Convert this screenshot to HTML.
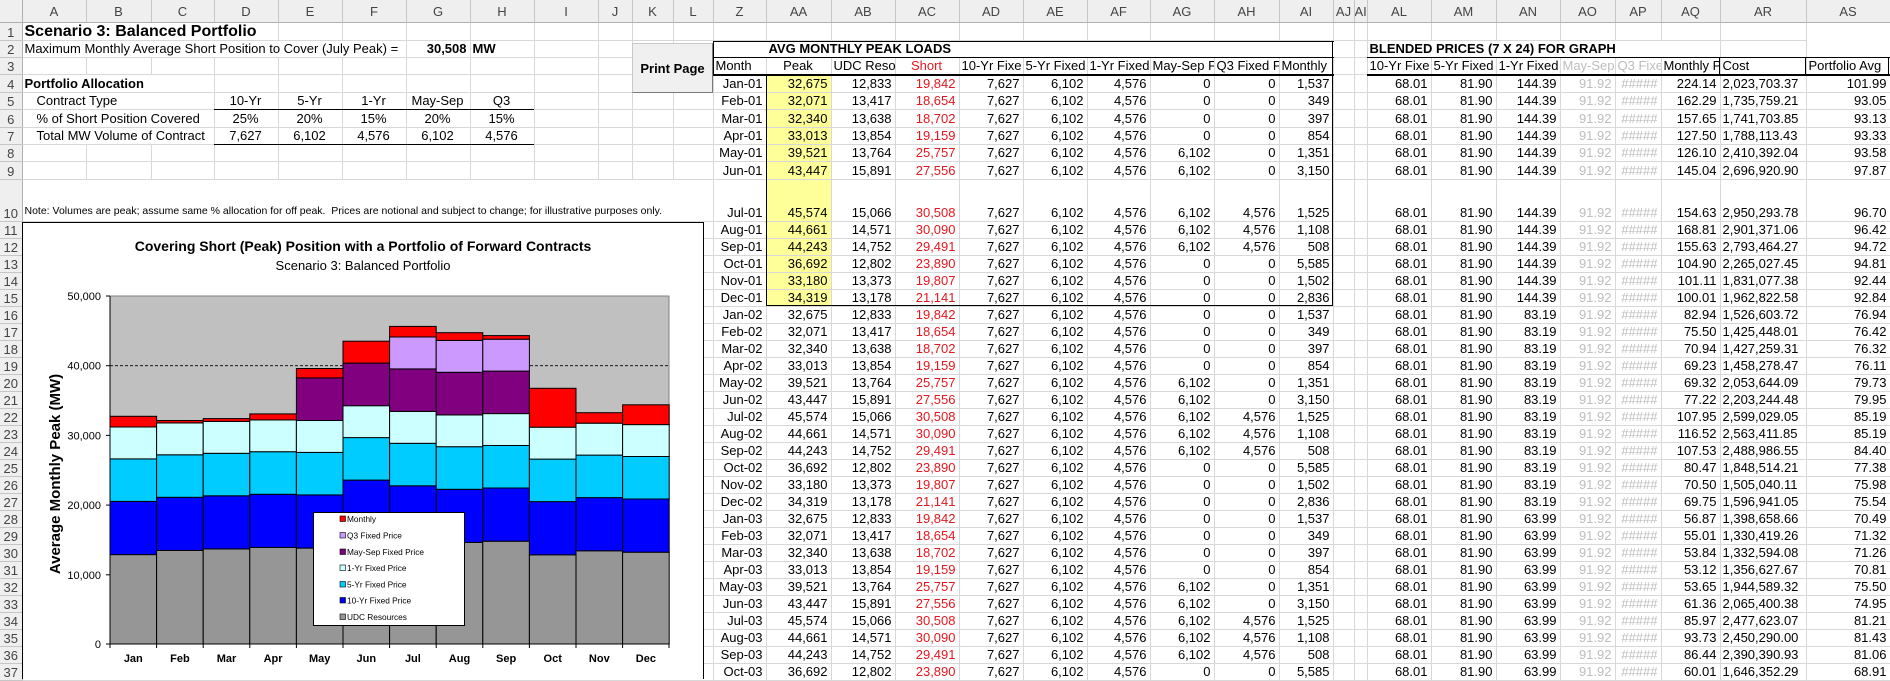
<!DOCTYPE html>
<html><head><meta charset="utf-8">
<style>
*{margin:0;padding:0;box-sizing:border-box}
body{width:1890px;height:679px;overflow:hidden;background:#fff;font-family:"Liberation Sans",Arial,sans-serif;position:relative}
table{position:absolute;left:0;top:0;border-collapse:collapse;table-layout:fixed;width:1890px}
td,th{border-right:1px solid #d8d8d8;border-bottom:1px solid #d8d8d8;font-size:13px;line-height:15px;white-space:nowrap;overflow:hidden;vertical-align:bottom;padding:0 3px 1px 2px;text-align:right;font-weight:normal;color:#000}
th{background:#efefef;color:#444;text-align:center;padding:0;border-color:#c6c6c6}
tr.h th{vertical-align:middle;height:22.7px;border-bottom:1px solid #b0b0b0}
tr.a td,tr.a th{height:17.4px}
tr.t td,tr.t th{height:42.7px}
tr.b td,tr.b th{height:16.9px}
th.rn{border-right:1px solid #b0b0b0}
.l{text-align:left}.c{text-align:center}.bo{font-weight:bold}
.rd{color:#e4171f}.g{color:#bdbdbd}.y{background:#ffff99}
.ln{position:absolute;background:#000}
#btn{position:absolute;left:632px;top:43px;width:81px;height:50px;background:#f0f0f0;border:1px solid #c8c8c8;border-right-color:#7a7a7a;border-bottom-color:#7a7a7a;font-weight:bold;font-size:13px;display:flex;align-items:center;justify-content:center}
</style></head><body>
<table>
<colgroup><col style="width:22px"><col style="width:64px"><col style="width:65px"><col style="width:63px"><col style="width:64px"><col style="width:64px"><col style="width:64px"><col style="width:64px"><col style="width:64px"><col style="width:64px"><col style="width:34px"><col style="width:41px"><col style="width:40px"><col style="width:53px"><col style="width:65px"><col style="width:64px"><col style="width:64px"><col style="width:64px"><col style="width:64px"><col style="width:63px"><col style="width:64px"><col style="width:65px"><col style="width:54px"><col style="width:21px"><col style="width:13px"><col style="width:64px"><col style="width:65px"><col style="width:64px"><col style="width:55px"><col style="width:46px"><col style="width:59px"><col style="width:86px"><col style="width:84px"></colgroup>
<tr class="h"><th class="rn"></th><th>A</th><th>B</th><th>C</th><th>D</th><th>E</th><th>F</th><th>G</th><th>H</th><th>I</th><th>J</th><th>K</th><th>L</th><th>Z</th><th>AA</th><th>AB</th><th>AC</th><th>AD</th><th>AE</th><th>AF</th><th>AG</th><th>AH</th><th>AI</th><th>AJ</th><th>AI</th><th>AL</th><th>AM</th><th>AN</th><th>AO</th><th>AP</th><th>AQ</th><th>AR</th><th>AS</th></tr>
<tr class="a"><th class="rn">1</th><td colspan="4" class="l bo" style="font-size:16px;overflow:visible">Scenario 3: Balanced Portfolio</td><td></td><td></td><td></td><td></td><td></td><td></td><td></td><td></td><td></td><td></td><td></td><td></td><td></td><td></td><td></td><td></td><td></td><td></td><td></td><td></td><td></td><td></td><td></td><td></td><td></td><td></td><td></td></tr>
<tr class="a"><th class="rn">2</th><td colspan="6" class="l">Maximum Monthly Average Short Position to Cover (July Peak) =</td><td class="bo">30,508</td><td class="l bo">MW</td><td></td><td></td><td></td><td></td><td style="border-color:#fff"></td><td colspan="9" class="l bo" style="border-right:0">AVG MONTHLY PEAK LOADS</td><td></td><td></td><td colspan="6" class="l bo" style="overflow:visible">BLENDED PRICES (7 X 24) FOR GRAPH</td><td></td><td></td></tr>
<tr class="a"><th class="rn">3</th><td></td><td></td><td></td><td></td><td></td><td></td><td></td><td></td><td></td><td></td><td></td><td></td><td class="l">Month</td><td class="c">Peak</td><td class="l">UDC Reso</td><td class="c rd">Short</td><td class="l">10-Yr Fixe</td><td class="l">5-Yr Fixed</td><td class="l">1-Yr Fixed</td><td class="l">May-Sep F</td><td class="l">Q3 Fixed F</td><td class="l">Monthly</td><td></td><td></td><td class="l">10-Yr Fixe</td><td class="l">5-Yr Fixed</td><td class="l">1-Yr Fixed</td><td class="l g">May-Sep</td><td class="l g">Q3 Fixe</td><td class="l">Monthly P</td><td class="l">Cost</td><td class="l">Portfolio Avg</td></tr>
<tr class="a"><th class="rn">4</th><td colspan="3" class="l bo">Portfolio Allocation</td><td></td><td></td><td></td><td></td><td></td><td></td><td></td><td></td><td></td><td>Jan-01</td><td class="y">32,675</td><td>12,833</td><td class="rd">19,842</td><td>7,627</td><td>6,102</td><td>4,576</td><td>0</td><td>0</td><td>1,537</td><td></td><td></td><td>68.01</td><td>81.90</td><td>144.39</td><td class="g">91.92</td><td class="g">#####</td><td>224.14</td><td class="l">2,023,703.37</td><td>101.99</td></tr>
<tr class="a"><th class="rn">5</th><td colspan="3" class="l" style="padding-left:14px">Contract Type</td><td class="c">10-Yr</td><td class="c">5-Yr</td><td class="c">1-Yr</td><td class="c">May-Sep</td><td class="c">Q3</td><td></td><td></td><td></td><td></td><td>Feb-01</td><td class="y">32,071</td><td>13,417</td><td class="rd">18,654</td><td>7,627</td><td>6,102</td><td>4,576</td><td>0</td><td>0</td><td>349</td><td></td><td></td><td>68.01</td><td>81.90</td><td>144.39</td><td class="g">91.92</td><td class="g">#####</td><td>162.29</td><td class="l">1,735,759.21</td><td>93.05</td></tr>
<tr class="a"><th class="rn">6</th><td colspan="3" class="l" style="padding-left:14px">% of Short Position Covered</td><td class="c">25%</td><td class="c">20%</td><td class="c">15%</td><td class="c">20%</td><td class="c">15%</td><td></td><td></td><td></td><td></td><td>Mar-01</td><td class="y">32,340</td><td>13,638</td><td class="rd">18,702</td><td>7,627</td><td>6,102</td><td>4,576</td><td>0</td><td>0</td><td>397</td><td></td><td></td><td>68.01</td><td>81.90</td><td>144.39</td><td class="g">91.92</td><td class="g">#####</td><td>157.65</td><td class="l">1,741,703.85</td><td>93.13</td></tr>
<tr class="a"><th class="rn">7</th><td colspan="3" class="l" style="padding-left:14px">Total MW Volume of Contract</td><td class="c">7,627</td><td class="c">6,102</td><td class="c">4,576</td><td class="c">6,102</td><td class="c">4,576</td><td></td><td></td><td></td><td></td><td>Apr-01</td><td class="y">33,013</td><td>13,854</td><td class="rd">19,159</td><td>7,627</td><td>6,102</td><td>4,576</td><td>0</td><td>0</td><td>854</td><td></td><td></td><td>68.01</td><td>81.90</td><td>144.39</td><td class="g">91.92</td><td class="g">#####</td><td>127.50</td><td class="l">1,788,113.43</td><td>93.33</td></tr>
<tr class="a"><th class="rn">8</th><td></td><td></td><td></td><td></td><td></td><td></td><td></td><td></td><td></td><td></td><td></td><td></td><td>May-01</td><td class="y">39,521</td><td>13,764</td><td class="rd">25,757</td><td>7,627</td><td>6,102</td><td>4,576</td><td>6,102</td><td>0</td><td>1,351</td><td></td><td></td><td>68.01</td><td>81.90</td><td>144.39</td><td class="g">91.92</td><td class="g">#####</td><td>126.10</td><td class="l">2,410,392.04</td><td>93.58</td></tr>
<tr class="a"><th class="rn">9</th><td></td><td></td><td></td><td></td><td></td><td></td><td></td><td></td><td></td><td></td><td></td><td></td><td>Jun-01</td><td class="y">43,447</td><td>15,891</td><td class="rd">27,556</td><td>7,627</td><td>6,102</td><td>4,576</td><td>6,102</td><td>0</td><td>3,150</td><td></td><td></td><td>68.01</td><td>81.90</td><td>144.39</td><td class="g">91.92</td><td class="g">#####</td><td>145.04</td><td class="l">2,696,920.90</td><td>97.87</td></tr>
<tr class="t"><th class="rn">10</th><td colspan="12" class="l" style="font-size:10.5px;padding-bottom:2px">Note: Volumes are peak; assume same % allocation for off peak.&nbsp; Prices are notional and subject to change; for illustrative purposes only.</td><td>Jul-01</td><td class="y">45,574</td><td>15,066</td><td class="rd">30,508</td><td>7,627</td><td>6,102</td><td>4,576</td><td>6,102</td><td>4,576</td><td>1,525</td><td></td><td></td><td>68.01</td><td>81.90</td><td>144.39</td><td class="g">91.92</td><td class="g">#####</td><td>154.63</td><td class="l">2,950,293.78</td><td>96.70</td></tr>
<tr class="b"><th class="rn">11</th><td colspan="12"></td><td>Aug-01</td><td class="y">44,661</td><td>14,571</td><td class="rd">30,090</td><td>7,627</td><td>6,102</td><td>4,576</td><td>6,102</td><td>4,576</td><td>1,108</td><td></td><td></td><td>68.01</td><td>81.90</td><td>144.39</td><td class="g">91.92</td><td class="g">#####</td><td>168.81</td><td class="l">2,901,371.06</td><td>96.42</td></tr>
<tr class="b"><th class="rn">12</th><td colspan="12"></td><td>Sep-01</td><td class="y">44,243</td><td>14,752</td><td class="rd">29,491</td><td>7,627</td><td>6,102</td><td>4,576</td><td>6,102</td><td>4,576</td><td>508</td><td></td><td></td><td>68.01</td><td>81.90</td><td>144.39</td><td class="g">91.92</td><td class="g">#####</td><td>155.63</td><td class="l">2,793,464.27</td><td>94.72</td></tr>
<tr class="b"><th class="rn">13</th><td colspan="12"></td><td>Oct-01</td><td class="y">36,692</td><td>12,802</td><td class="rd">23,890</td><td>7,627</td><td>6,102</td><td>4,576</td><td>0</td><td>0</td><td>5,585</td><td></td><td></td><td>68.01</td><td>81.90</td><td>144.39</td><td class="g">91.92</td><td class="g">#####</td><td>104.90</td><td class="l">2,265,027.45</td><td>94.81</td></tr>
<tr class="b"><th class="rn">14</th><td colspan="12"></td><td>Nov-01</td><td class="y">33,180</td><td>13,373</td><td class="rd">19,807</td><td>7,627</td><td>6,102</td><td>4,576</td><td>0</td><td>0</td><td>1,502</td><td></td><td></td><td>68.01</td><td>81.90</td><td>144.39</td><td class="g">91.92</td><td class="g">#####</td><td>101.11</td><td class="l">1,831,077.38</td><td>92.44</td></tr>
<tr class="b"><th class="rn">15</th><td colspan="12"></td><td>Dec-01</td><td class="y">34,319</td><td>13,178</td><td class="rd">21,141</td><td>7,627</td><td>6,102</td><td>4,576</td><td>0</td><td>0</td><td>2,836</td><td></td><td></td><td>68.01</td><td>81.90</td><td>144.39</td><td class="g">91.92</td><td class="g">#####</td><td>100.01</td><td class="l">1,962,822.58</td><td>92.84</td></tr>
<tr class="b"><th class="rn">16</th><td colspan="12"></td><td>Jan-02</td><td>32,675</td><td>12,833</td><td class="rd">19,842</td><td>7,627</td><td>6,102</td><td>4,576</td><td>0</td><td>0</td><td>1,537</td><td></td><td></td><td>68.01</td><td>81.90</td><td>83.19</td><td class="g">91.92</td><td class="g">#####</td><td>82.94</td><td class="l">1,526,603.72</td><td>76.94</td></tr>
<tr class="b"><th class="rn">17</th><td colspan="12"></td><td>Feb-02</td><td>32,071</td><td>13,417</td><td class="rd">18,654</td><td>7,627</td><td>6,102</td><td>4,576</td><td>0</td><td>0</td><td>349</td><td></td><td></td><td>68.01</td><td>81.90</td><td>83.19</td><td class="g">91.92</td><td class="g">#####</td><td>75.50</td><td class="l">1,425,448.01</td><td>76.42</td></tr>
<tr class="b"><th class="rn">18</th><td colspan="12"></td><td>Mar-02</td><td>32,340</td><td>13,638</td><td class="rd">18,702</td><td>7,627</td><td>6,102</td><td>4,576</td><td>0</td><td>0</td><td>397</td><td></td><td></td><td>68.01</td><td>81.90</td><td>83.19</td><td class="g">91.92</td><td class="g">#####</td><td>70.94</td><td class="l">1,427,259.31</td><td>76.32</td></tr>
<tr class="b"><th class="rn">19</th><td colspan="12"></td><td>Apr-02</td><td>33,013</td><td>13,854</td><td class="rd">19,159</td><td>7,627</td><td>6,102</td><td>4,576</td><td>0</td><td>0</td><td>854</td><td></td><td></td><td>68.01</td><td>81.90</td><td>83.19</td><td class="g">91.92</td><td class="g">#####</td><td>69.23</td><td class="l">1,458,278.47</td><td>76.11</td></tr>
<tr class="b"><th class="rn">20</th><td colspan="12"></td><td>May-02</td><td>39,521</td><td>13,764</td><td class="rd">25,757</td><td>7,627</td><td>6,102</td><td>4,576</td><td>6,102</td><td>0</td><td>1,351</td><td></td><td></td><td>68.01</td><td>81.90</td><td>83.19</td><td class="g">91.92</td><td class="g">#####</td><td>69.32</td><td class="l">2,053,644.09</td><td>79.73</td></tr>
<tr class="b"><th class="rn">21</th><td colspan="12"></td><td>Jun-02</td><td>43,447</td><td>15,891</td><td class="rd">27,556</td><td>7,627</td><td>6,102</td><td>4,576</td><td>6,102</td><td>0</td><td>3,150</td><td></td><td></td><td>68.01</td><td>81.90</td><td>83.19</td><td class="g">91.92</td><td class="g">#####</td><td>77.22</td><td class="l">2,203,244.48</td><td>79.95</td></tr>
<tr class="b"><th class="rn">22</th><td colspan="12"></td><td>Jul-02</td><td>45,574</td><td>15,066</td><td class="rd">30,508</td><td>7,627</td><td>6,102</td><td>4,576</td><td>6,102</td><td>4,576</td><td>1,525</td><td></td><td></td><td>68.01</td><td>81.90</td><td>83.19</td><td class="g">91.92</td><td class="g">#####</td><td>107.95</td><td class="l">2,599,029.05</td><td>85.19</td></tr>
<tr class="b"><th class="rn">23</th><td colspan="12"></td><td>Aug-02</td><td>44,661</td><td>14,571</td><td class="rd">30,090</td><td>7,627</td><td>6,102</td><td>4,576</td><td>6,102</td><td>4,576</td><td>1,108</td><td></td><td></td><td>68.01</td><td>81.90</td><td>83.19</td><td class="g">91.92</td><td class="g">#####</td><td>116.52</td><td class="l">2,563,411.85</td><td>85.19</td></tr>
<tr class="b"><th class="rn">24</th><td colspan="12"></td><td>Sep-02</td><td>44,243</td><td>14,752</td><td class="rd">29,491</td><td>7,627</td><td>6,102</td><td>4,576</td><td>6,102</td><td>4,576</td><td>508</td><td></td><td></td><td>68.01</td><td>81.90</td><td>83.19</td><td class="g">91.92</td><td class="g">#####</td><td>107.53</td><td class="l">2,488,986.55</td><td>84.40</td></tr>
<tr class="b"><th class="rn">25</th><td colspan="12"></td><td>Oct-02</td><td>36,692</td><td>12,802</td><td class="rd">23,890</td><td>7,627</td><td>6,102</td><td>4,576</td><td>0</td><td>0</td><td>5,585</td><td></td><td></td><td>68.01</td><td>81.90</td><td>83.19</td><td class="g">91.92</td><td class="g">#####</td><td>80.47</td><td class="l">1,848,514.21</td><td>77.38</td></tr>
<tr class="b"><th class="rn">26</th><td colspan="12"></td><td>Nov-02</td><td>33,180</td><td>13,373</td><td class="rd">19,807</td><td>7,627</td><td>6,102</td><td>4,576</td><td>0</td><td>0</td><td>1,502</td><td></td><td></td><td>68.01</td><td>81.90</td><td>83.19</td><td class="g">91.92</td><td class="g">#####</td><td>70.50</td><td class="l">1,505,040.11</td><td>75.98</td></tr>
<tr class="b"><th class="rn">27</th><td colspan="12"></td><td>Dec-02</td><td>34,319</td><td>13,178</td><td class="rd">21,141</td><td>7,627</td><td>6,102</td><td>4,576</td><td>0</td><td>0</td><td>2,836</td><td></td><td></td><td>68.01</td><td>81.90</td><td>83.19</td><td class="g">91.92</td><td class="g">#####</td><td>69.75</td><td class="l">1,596,941.05</td><td>75.54</td></tr>
<tr class="b"><th class="rn">28</th><td colspan="12"></td><td>Jan-03</td><td>32,675</td><td>12,833</td><td class="rd">19,842</td><td>7,627</td><td>6,102</td><td>4,576</td><td>0</td><td>0</td><td>1,537</td><td></td><td></td><td>68.01</td><td>81.90</td><td>63.99</td><td class="g">91.92</td><td class="g">#####</td><td>56.87</td><td class="l">1,398,658.66</td><td>70.49</td></tr>
<tr class="b"><th class="rn">29</th><td colspan="12"></td><td>Feb-03</td><td>32,071</td><td>13,417</td><td class="rd">18,654</td><td>7,627</td><td>6,102</td><td>4,576</td><td>0</td><td>0</td><td>349</td><td></td><td></td><td>68.01</td><td>81.90</td><td>63.99</td><td class="g">91.92</td><td class="g">#####</td><td>55.01</td><td class="l">1,330,419.26</td><td>71.32</td></tr>
<tr class="b"><th class="rn">30</th><td colspan="12"></td><td>Mar-03</td><td>32,340</td><td>13,638</td><td class="rd">18,702</td><td>7,627</td><td>6,102</td><td>4,576</td><td>0</td><td>0</td><td>397</td><td></td><td></td><td>68.01</td><td>81.90</td><td>63.99</td><td class="g">91.92</td><td class="g">#####</td><td>53.84</td><td class="l">1,332,594.08</td><td>71.26</td></tr>
<tr class="b"><th class="rn">31</th><td colspan="12"></td><td>Apr-03</td><td>33,013</td><td>13,854</td><td class="rd">19,159</td><td>7,627</td><td>6,102</td><td>4,576</td><td>0</td><td>0</td><td>854</td><td></td><td></td><td>68.01</td><td>81.90</td><td>63.99</td><td class="g">91.92</td><td class="g">#####</td><td>53.12</td><td class="l">1,356,627.67</td><td>70.81</td></tr>
<tr class="b"><th class="rn">32</th><td colspan="12"></td><td>May-03</td><td>39,521</td><td>13,764</td><td class="rd">25,757</td><td>7,627</td><td>6,102</td><td>4,576</td><td>6,102</td><td>0</td><td>1,351</td><td></td><td></td><td>68.01</td><td>81.90</td><td>63.99</td><td class="g">91.92</td><td class="g">#####</td><td>53.65</td><td class="l">1,944,589.32</td><td>75.50</td></tr>
<tr class="b"><th class="rn">33</th><td colspan="12"></td><td>Jun-03</td><td>43,447</td><td>15,891</td><td class="rd">27,556</td><td>7,627</td><td>6,102</td><td>4,576</td><td>6,102</td><td>0</td><td>3,150</td><td></td><td></td><td>68.01</td><td>81.90</td><td>63.99</td><td class="g">91.92</td><td class="g">#####</td><td>61.36</td><td class="l">2,065,400.38</td><td>74.95</td></tr>
<tr class="b"><th class="rn">34</th><td colspan="12"></td><td>Jul-03</td><td>45,574</td><td>15,066</td><td class="rd">30,508</td><td>7,627</td><td>6,102</td><td>4,576</td><td>6,102</td><td>4,576</td><td>1,525</td><td></td><td></td><td>68.01</td><td>81.90</td><td>63.99</td><td class="g">91.92</td><td class="g">#####</td><td>85.97</td><td class="l">2,477,623.07</td><td>81.21</td></tr>
<tr class="b"><th class="rn">35</th><td colspan="12"></td><td>Aug-03</td><td>44,661</td><td>14,571</td><td class="rd">30,090</td><td>7,627</td><td>6,102</td><td>4,576</td><td>6,102</td><td>4,576</td><td>1,108</td><td></td><td></td><td>68.01</td><td>81.90</td><td>63.99</td><td class="g">91.92</td><td class="g">#####</td><td>93.73</td><td class="l">2,450,290.00</td><td>81.43</td></tr>
<tr class="b"><th class="rn">36</th><td colspan="12"></td><td>Sep-03</td><td>44,243</td><td>14,752</td><td class="rd">29,491</td><td>7,627</td><td>6,102</td><td>4,576</td><td>6,102</td><td>4,576</td><td>508</td><td></td><td></td><td>68.01</td><td>81.90</td><td>63.99</td><td class="g">91.92</td><td class="g">#####</td><td>86.44</td><td class="l">2,390,390.93</td><td>81.06</td></tr>
<tr class="b"><th class="rn">37</th><td colspan="12"></td><td>Oct-03</td><td>36,692</td><td>12,802</td><td class="rd">23,890</td><td>7,627</td><td>6,102</td><td>4,576</td><td>0</td><td>0</td><td>5,585</td><td></td><td></td><td>68.01</td><td>81.90</td><td>63.99</td><td class="g">91.92</td><td class="g">#####</td><td>60.01</td><td class="l">1,646,352.29</td><td>68.91</td></tr>
</table>

<!-- border overlays -->
<div class="ln" style="left:214px;top:109px;width:320px;height:1px"></div>
<div class="ln" style="left:214px;top:144px;width:320px;height:1px"></div>
<div class="ln" style="left:713px;top:41px;width:621px;height:1px"></div>
<div class="ln" style="left:713px;top:41px;width:1px;height:35px"></div>
<div class="ln" style="left:713px;top:57px;width:621px;height:1px"></div>
<div class="ln" style="left:713px;top:74px;width:621px;height:2px"></div>
<div class="ln" style="left:766px;top:75px;width:1px;height:231px"></div>
<div class="ln" style="left:1332px;top:41px;width:1px;height:265px"></div>
<div class="ln" style="left:766px;top:305px;width:567px;height:1px"></div>
<div class="ln" style="left:1367px;top:57px;width:523px;height:1px"></div>
<div class="ln" style="left:1367px;top:74px;width:523px;height:2px"></div>
<div class="ln" style="left:1719px;top:57px;width:1px;height:18px"></div>
<div class="ln" style="left:1805px;top:57px;width:1px;height:18px"></div>
<div class="ln" style="left:1888px;top:57px;width:1px;height:18px"></div>
<div id="btn">Print Page</div>

<svg style="position:absolute;left:0;top:0" width="705" height="679" viewBox="0 0 705 679" font-family="Liberation Sans, Arial, sans-serif">
<rect x="22.5" y="222.5" width="681" height="470" fill="#fff" stroke="#000"/>
<text x="363" y="251" text-anchor="middle" font-size="14" font-weight="bold">Covering Short (Peak) Position with a Portfolio of Forward Contracts</text>
<text x="363" y="270" text-anchor="middle" font-size="13">Scenario 3: Balanced Portfolio</text>
<rect x="110" y="296" width="559" height="348" fill="#c0c0c0" stroke="#808080"/>
<g stroke="#000" stroke-width="0.8" stroke-dasharray="3,2">
<line x1="110" y1="365.7" x2="669" y2="365.7"/><line x1="110" y1="435.4" x2="669" y2="435.4"/><line x1="110" y1="505.1" x2="669" y2="505.1"/><line x1="110" y1="574.8" x2="669" y2="574.8"/>
</g>
<g stroke="#000" stroke-width="1">
<!-- Jan -->
<rect x="110" y="554.6" width="46.6" height="89.4" fill="#969696"/><rect x="110" y="501.4" width="46.6" height="53.2" fill="#0000ff"/><rect x="110" y="458.9" width="46.6" height="42.5" fill="#00ccff"/><rect x="110" y="427" width="46.6" height="31.9" fill="#ccffff"/><rect x="110" y="416.3" width="46.6" height="10.7" fill="#ff0000"/>
<!-- Feb -->
<rect x="156.6" y="550.5" width="46.6" height="93.5" fill="#969696"/><rect x="156.6" y="497.3" width="46.6" height="53.2" fill="#0000ff"/><rect x="156.6" y="454.8" width="46.6" height="42.5" fill="#00ccff"/><rect x="156.6" y="422.9" width="46.6" height="31.9" fill="#ccffff"/><rect x="156.6" y="420.5" width="46.6" height="2.4" fill="#ff0000"/>
<!-- Mar -->
<rect x="203.2" y="548.9" width="46.6" height="95.1" fill="#969696"/><rect x="203.2" y="495.8" width="46.6" height="53.1" fill="#0000ff"/><rect x="203.2" y="453.3" width="46.6" height="42.5" fill="#00ccff"/><rect x="203.2" y="421.4" width="46.6" height="31.9" fill="#ccffff"/><rect x="203.2" y="418.6" width="46.6" height="2.8" fill="#ff0000"/>
<!-- Apr -->
<rect x="249.8" y="547.4" width="46.6" height="96.6" fill="#969696"/><rect x="249.8" y="494.3" width="46.6" height="53.1" fill="#0000ff"/><rect x="249.8" y="451.7" width="46.6" height="42.6" fill="#00ccff"/><rect x="249.8" y="419.9" width="46.6" height="31.8" fill="#ccffff"/><rect x="249.8" y="413.9" width="46.6" height="6" fill="#ff0000"/>
<!-- May -->
<rect x="296.4" y="548.1" width="46.6" height="95.9" fill="#969696"/><rect x="296.4" y="494.9" width="46.6" height="53.2" fill="#0000ff"/><rect x="296.4" y="452.4" width="46.6" height="42.5" fill="#00ccff"/><rect x="296.4" y="420.5" width="46.6" height="31.9" fill="#ccffff"/><rect x="296.4" y="377.9" width="46.6" height="42.6" fill="#800080"/><rect x="296.4" y="368.5" width="46.6" height="9.4" fill="#ff0000"/>
<!-- Jun -->
<rect x="343" y="533.2" width="46.6" height="110.8" fill="#969696"/><rect x="343" y="480.1" width="46.6" height="53.1" fill="#0000ff"/><rect x="343" y="437.6" width="46.6" height="42.5" fill="#00ccff"/><rect x="343" y="405.7" width="46.6" height="31.9" fill="#ccffff"/><rect x="343" y="363.1" width="46.6" height="42.6" fill="#800080"/><rect x="343" y="341.2" width="46.6" height="21.9" fill="#ff0000"/>
<!-- Jul -->
<rect x="389.6" y="539" width="46.6" height="105" fill="#969696"/><rect x="389.6" y="485.8" width="46.6" height="53.2" fill="#0000ff"/><rect x="389.6" y="443.3" width="46.6" height="42.5" fill="#00ccff"/><rect x="389.6" y="411.4" width="46.6" height="31.9" fill="#ccffff"/><rect x="389.6" y="368.9" width="46.6" height="42.5" fill="#800080"/><rect x="389.6" y="337" width="46.6" height="31.9" fill="#cc99ff"/><rect x="389.6" y="326.4" width="46.6" height="10.6" fill="#ff0000"/>
<!-- Aug -->
<rect x="436.2" y="542.4" width="46.6" height="101.6" fill="#969696"/><rect x="436.2" y="489.3" width="46.6" height="53.1" fill="#0000ff"/><rect x="436.2" y="446.7" width="46.6" height="42.6" fill="#00ccff"/><rect x="436.2" y="414.9" width="46.6" height="31.8" fill="#ccffff"/><rect x="436.2" y="372.3" width="46.6" height="42.6" fill="#800080"/><rect x="436.2" y="340.4" width="46.6" height="31.9" fill="#cc99ff"/><rect x="436.2" y="332.7" width="46.6" height="7.7" fill="#ff0000"/>
<!-- Sep -->
<rect x="482.8" y="541.2" width="46.6" height="102.8" fill="#969696"/><rect x="482.8" y="488" width="46.6" height="53.2" fill="#0000ff"/><rect x="482.8" y="445.5" width="46.6" height="42.5" fill="#00ccff"/><rect x="482.8" y="413.6" width="46.6" height="31.9" fill="#ccffff"/><rect x="482.8" y="371.1" width="46.6" height="42.5" fill="#800080"/><rect x="482.8" y="339.2" width="46.6" height="31.9" fill="#cc99ff"/><rect x="482.8" y="335.6" width="46.6" height="3.6" fill="#ff0000"/>
<!-- Oct -->
<rect x="529.4" y="554.8" width="46.6" height="89.2" fill="#969696"/><rect x="529.4" y="501.6" width="46.6" height="53.2" fill="#0000ff"/><rect x="529.4" y="459.1" width="46.6" height="42.5" fill="#00ccff"/><rect x="529.4" y="427.2" width="46.6" height="31.9" fill="#ccffff"/><rect x="529.4" y="388.3" width="46.6" height="38.9" fill="#ff0000"/>
<!-- Nov -->
<rect x="576" y="550.8" width="46.6" height="93.2" fill="#969696"/><rect x="576" y="497.6" width="46.6" height="53.2" fill="#0000ff"/><rect x="576" y="455.1" width="46.6" height="42.5" fill="#00ccff"/><rect x="576" y="423.2" width="46.6" height="31.9" fill="#ccffff"/><rect x="576" y="412.7" width="46.6" height="10.5" fill="#ff0000"/>
<!-- Dec -->
<rect x="622.6" y="552.2" width="46.6" height="91.8" fill="#969696"/><rect x="622.6" y="499" width="46.6" height="53.2" fill="#0000ff"/><rect x="622.6" y="456.5" width="46.6" height="42.5" fill="#00ccff"/><rect x="622.6" y="424.6" width="46.6" height="31.9" fill="#ccffff"/><rect x="622.6" y="404.8" width="46.6" height="19.8" fill="#ff0000"/>
</g>
<g stroke="#000" stroke-width="1">
<line x1="110" y1="296" x2="110" y2="644"/><line x1="110" y1="644" x2="669" y2="644"/>
<line x1="106" y1="296" x2="110" y2="296"/><line x1="106" y1="365.7" x2="110" y2="365.7"/><line x1="106" y1="435.4" x2="110" y2="435.4"/><line x1="106" y1="505.1" x2="110" y2="505.1"/><line x1="106" y1="574.8" x2="110" y2="574.8"/><line x1="106" y1="644" x2="110" y2="644"/>
<line x1="156.6" y1="644" x2="156.6" y2="648"/><line x1="203.2" y1="644" x2="203.2" y2="648"/><line x1="249.8" y1="644" x2="249.8" y2="648"/><line x1="296.4" y1="644" x2="296.4" y2="648"/><line x1="343" y1="644" x2="343" y2="648"/><line x1="389.6" y1="644" x2="389.6" y2="648"/><line x1="436.2" y1="644" x2="436.2" y2="648"/><line x1="482.8" y1="644" x2="482.8" y2="648"/><line x1="529.4" y1="644" x2="529.4" y2="648"/><line x1="576" y1="644" x2="576" y2="648"/><line x1="622.6" y1="644" x2="622.6" y2="648"/><line x1="110" y1="644" x2="110" y2="648"/><line x1="669" y1="644" x2="669" y2="648"/>
</g>
<g font-size="11" text-anchor="end">
<text x="101" y="300">50,000</text><text x="101" y="369.7">40,000</text><text x="101" y="439.4">30,000</text><text x="101" y="509.1">20,000</text><text x="101" y="578.8">10,000</text><text x="101" y="648">0</text>
</g>
<g font-size="11" font-weight="bold" text-anchor="middle">
<text x="133.3" y="662">Jan</text><text x="179.9" y="662">Feb</text><text x="226.5" y="662">Mar</text><text x="273.1" y="662">Apr</text><text x="319.7" y="662">May</text><text x="366.3" y="662">Jun</text><text x="412.9" y="662">Jul</text><text x="459.5" y="662">Aug</text><text x="506.1" y="662">Sep</text><text x="552.7" y="662">Oct</text><text x="599.3" y="662">Nov</text><text x="645.9" y="662">Dec</text>
</g>
<text transform="translate(60,474) rotate(-90)" text-anchor="middle" font-size="15" font-weight="bold">Average Monthly Peak (MW)</text>
<rect x="313.5" y="512.5" width="151" height="113" fill="#fff" stroke="#000"/>
<g stroke="#000" stroke-width="0.6">
<rect x="340" y="516" width="5.5" height="5.5" fill="#ff0000"/><rect x="340" y="532.5" width="5.5" height="5.5" fill="#cc99ff"/><rect x="340" y="549" width="5.5" height="5.5" fill="#800080"/><rect x="340" y="565" width="5.5" height="5.5" fill="#ccffff"/><rect x="340" y="581.5" width="5.5" height="5.5" fill="#00ccff"/><rect x="340" y="597.5" width="5.5" height="5.5" fill="#0000ff"/><rect x="340" y="614" width="5.5" height="5.5" fill="#969696"/>
</g>
<g font-size="8.3">
<text x="347" y="522">Monthly</text><text x="347" y="538.5">Q3 Fixed Price</text><text x="347" y="555">May-Sep Fixed Price</text><text x="347" y="571">1-Yr Fixed Price</text><text x="347" y="587.5">5-Yr Fixed Price</text><text x="347" y="603.5">10-Yr Fixed Price</text><text x="347" y="620">UDC Resources</text>
</g>
</svg>
</body></html>
